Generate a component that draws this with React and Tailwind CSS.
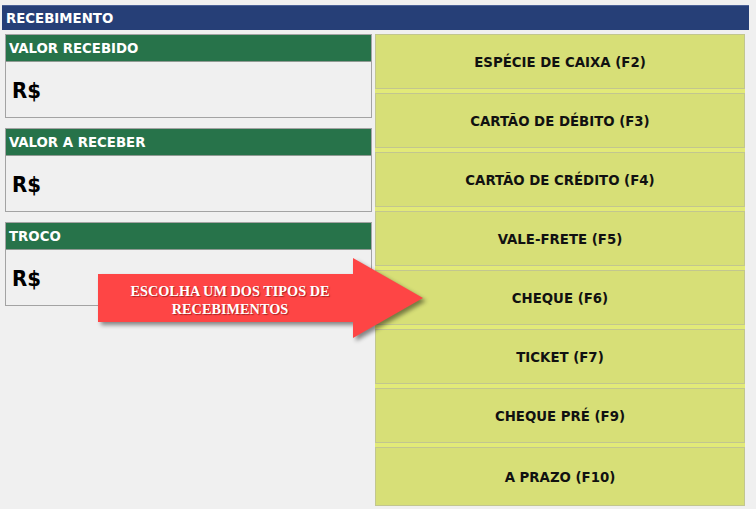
import React from 'react';

const panels = ['VALOR RECEBIDO', 'VALOR A RECEBER', 'TROCO'];

const options = [
  'ESPÉCIE DE CAIXA (F2)',
  'CARTÃO DE DÉBITO (F3)',
  'CARTÃO DE CRÉDITO (F4)',
  'VALE-FRETE (F5)',
  'CHEQUE (F6)',
  'TICKET (F7)',
  'CHEQUE PRÉ (F9)',
  'A PRAZO (F10)',
];

const Panel = ({ title }) => (
  <div className="flex flex-col border border-[#a3a3a3]">
    <div className="h-[27px] flex items-center pl-[3px] pt-[1px] bg-[#27734a] border-b border-[#8f9a93] text-white font-bold text-[14.8px]">
      {title}
    </div>
    <div className="h-[55px] flex items-center pl-[6px] pt-[1px] bg-[#f0f0f0] text-black font-bold text-[22px]">
      R$
    </div>
  </div>
);

const Arrow = () => (
  <div className="absolute left-[98px] top-[258px] w-[335px] h-[88px]">
    <svg width="335" height="88" viewBox="0 0 335 88" className="[filter:drop-shadow(3px_3px_2px_rgba(0,0,0,0.45))]">
      <polygon points="0,16 255,16 255,0 325,40 255,80 255,64 0,64" fill="#fe4545" />
    </svg>
    <div className="absolute left-0 top-[24px] w-[264px] text-center text-white font-bold text-[14.3px] leading-[18px] font-['Liberation_Serif',serif] [text-shadow:1px_1px_1px_rgba(90,0,0,0.5)]">
      ESCOLHA UM DOS TIPOS DE
      <br />
      RECEBIMENTOS
    </div>
  </div>
);

export default function App() {
  return (
    <div className="relative w-full h-[509px] bg-[#f0f0f0] pt-[5px] font-['DejaVu_Sans_Condensed','DejaVu_Sans',sans-serif] overflow-hidden">
      <div className="mx-[2px] w-[747px] h-[25px] flex items-center pl-[4px] bg-[#263f77] border-t border-[#4b6196] text-white font-bold text-[14.8px]">
        RECEBIMENTO
      </div>

      <div className="flex mt-[4px] pl-[5px] gap-[3px]">
        <div className="w-[367px] flex flex-col gap-[10px]">
          {panels.map((p) => (
            <Panel key={p} title={p} />
          ))}
        </div>

        <div className="w-[370px] flex flex-col gap-[4px] bg-[#e2ea78]">
          {options.map((o, i) => (
            <button
              key={o}
              className={`${i === options.length - 1 ? 'h-[59px]' : 'h-[55px]'} w-full flex items-center justify-center pt-[2px] bg-[#d7df77] border border-[#c2c68f] text-[#111] font-bold text-[14.8px]`}
            >
              {o}
            </button>
          ))}
        </div>
      </div>

      <Arrow />
    </div>
  );
}
